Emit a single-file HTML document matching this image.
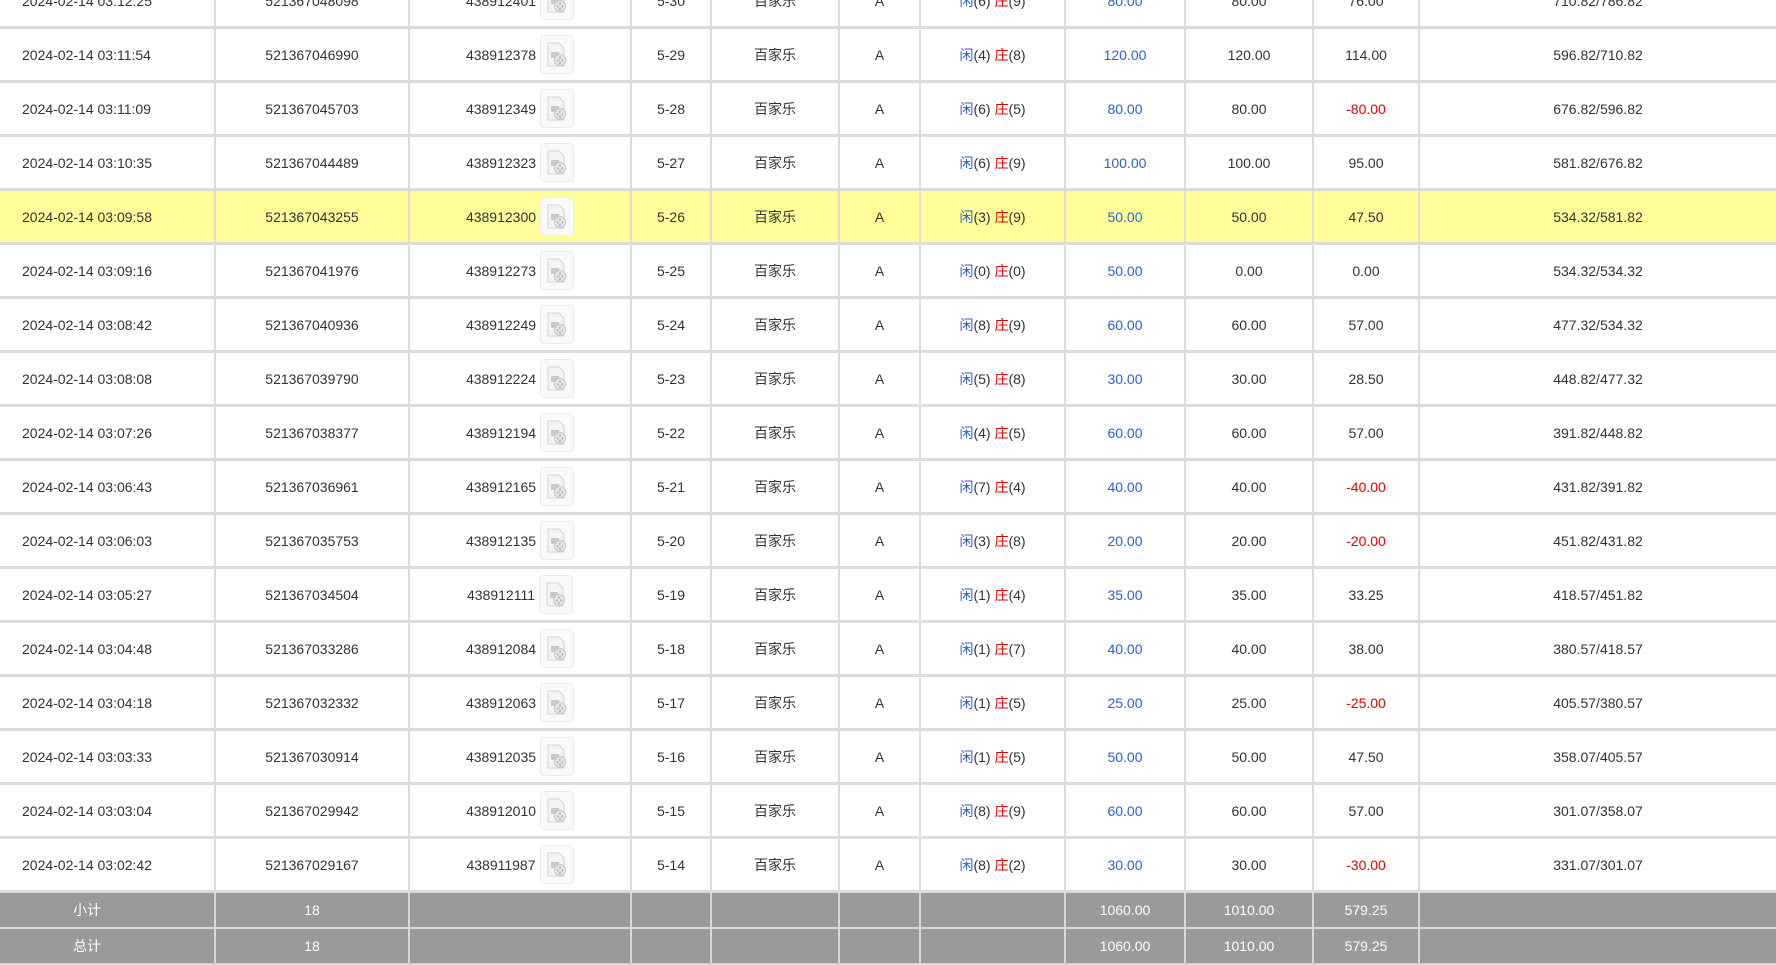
<!DOCTYPE html>
<html><head><meta charset="utf-8">
<style>
html,body{margin:0;padding:0;background:#fff;width:1776px;height:963px;overflow:hidden}
table{position:absolute;left:0;top:-25px;border-collapse:collapse;table-layout:fixed;width:1776px;font-family:"Liberation Sans","Noto Sans CJK SC",sans-serif;font-size:14px;color:#333}
td{border-right:2px solid #dcdcdc;border-bottom:3px solid #dcdcdc;height:51px;padding:0;text-align:center;vertical-align:middle;white-space:nowrap;overflow:hidden}
td:last-child{border-right:none}
td.t{text-align:left;padding-left:22px}
tr.hl td{background:#ffff99}
.b{color:#2a5fd6}.r{color:#e60000}
.w{display:inline-flex;align-items:center}
.ic{display:inline-block;width:32px;height:37px;border:1px solid #ececec;border-radius:4px;margin-left:4px;background:#fafafa;position:relative}
.ic svg{position:absolute;left:5px;top:6px}
tr.f td{background:#9a9a9a;color:#fff;height:34px;border-bottom:2px solid #d8d8d8;border-right:2px solid #d8d8d8}
tr.f td:first-child{padding-right:40px}
tr.f td:last-child{border-right:none}
</style></head><body>
<table>
<colgroup><col style="width:215px"><col style="width:194px"><col style="width:222px"><col style="width:80px"><col style="width:128px"><col style="width:81px"><col style="width:145px"><col style="width:120px"><col style="width:128px"><col style="width:106px"><col></colgroup>
<tbody id="tb"></tbody>
</table>
<script>
var d=[
["03:12:25","521367048098","438912401","5-30",6,9,"80.00","80.00","76.00","710.82/786.82"],
["03:11:54","521367046990","438912378","5-29",4,8,"120.00","120.00","114.00","596.82/710.82"],
["03:11:09","521367045703","438912349","5-28",6,5,"80.00","80.00","-80.00","676.82/596.82"],
["03:10:35","521367044489","438912323","5-27",6,9,"100.00","100.00","95.00","581.82/676.82"],
["03:09:58","521367043255","438912300","5-26",3,9,"50.00","50.00","47.50","534.32/581.82"],
["03:09:16","521367041976","438912273","5-25",0,0,"50.00","0.00","0.00","534.32/534.32"],
["03:08:42","521367040936","438912249","5-24",8,9,"60.00","60.00","57.00","477.32/534.32"],
["03:08:08","521367039790","438912224","5-23",5,8,"30.00","30.00","28.50","448.82/477.32"],
["03:07:26","521367038377","438912194","5-22",4,5,"60.00","60.00","57.00","391.82/448.82"],
["03:06:43","521367036961","438912165","5-21",7,4,"40.00","40.00","-40.00","431.82/391.82"],
["03:06:03","521367035753","438912135","5-20",3,8,"20.00","20.00","-20.00","451.82/431.82"],
["03:05:27","521367034504","438912111","5-19",1,4,"35.00","35.00","33.25","418.57/451.82"],
["03:04:48","521367033286","438912084","5-18",1,7,"40.00","40.00","38.00","380.57/418.57"],
["03:04:18","521367032332","438912063","5-17",1,5,"25.00","25.00","-25.00","405.57/380.57"],
["03:03:33","521367030914","438912035","5-16",1,5,"50.00","50.00","47.50","358.07/405.57"],
["03:03:04","521367029942","438912010","5-15",8,9,"60.00","60.00","57.00","301.07/358.07"],
["03:02:42","521367029167","438911987","5-14",8,2,"30.00","30.00","-30.00","331.07/301.07"]];
var ic='<span class="ic"><svg width="22" height="26" viewBox="0 0 22 26"><path d="M2 1h11l5 5v18H2z" fill="#f4f4f4" stroke="#d4d4d4"/><path d="M5 10h8v6H5z" fill="#c8c8c8"/><circle cx="14" cy="18" r="5.5" fill="#e8e8e8" stroke="#c4c4c4"/><circle cx="14" cy="15.5" r="1.2" fill="#bbb"/><circle cx="11.8" cy="18.5" r="1.2" fill="#bbb"/><circle cx="16.2" cy="18.5" r="1.2" fill="#bbb"/><circle cx="14" cy="21" r="1.2" fill="#bbb"/></svg></span>';
var h='';
d.forEach(function(r,i){
h+='<tr'+(i==4?' class="hl"':'')+'><td class="t">2024-02-14 '+r[0]+'</td><td>'+r[1]+'</td><td><span class="w">'+r[2]+ic+'</span></td><td>'+r[3]+'</td><td>百家乐</td><td>A</td><td><span class="b">闲</span>('+r[4]+') <span class="r">庄</span>('+r[5]+')</td><td class="b">'+r[6]+'</td><td>'+r[7]+'</td><td'+(r[8][0]=='-'?' class="r"':'')+'>'+r[8]+'</td><td>'+r[9]+'</td></tr>';
});
h+='<tr class="f"><td>小计</td><td>18</td><td></td><td></td><td></td><td></td><td></td><td>1060.00</td><td>1010.00</td><td>579.25</td><td></td></tr>';
h+='<tr class="f"><td>总计</td><td>18</td><td></td><td></td><td></td><td></td><td></td><td>1060.00</td><td>1010.00</td><td>579.25</td><td></td></tr>';
document.getElementById('tb').innerHTML=h;
</script>
</body></html>
